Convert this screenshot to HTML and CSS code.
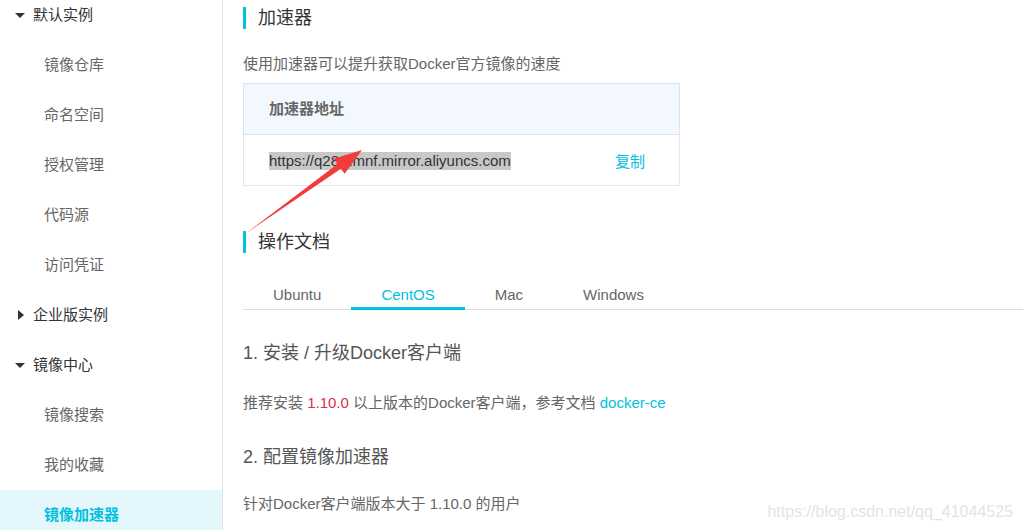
FILE: index.html
```html
<!DOCTYPE html>
<html lang="zh-CN">
<head>
    <meta charset="UTF-8">
    <meta name="viewport" content="width=device-width, initial-scale=1.0">
    <title>镜像加速器</title>
    <link rel="stylesheet" href="styles.css">
</head>
<body>
    <div class="layout">
        <!-- Боковое меню -->
        <aside class="sidebar">
            <ul class="menu">
                <li class="group"><span class="caret caret-down"></span>默认实例</li>
                <li class="item">镜像仓库</li>
                <li class="item">命名空间</li>
                <li class="item">授权管理</li>
                <li class="item">代码源</li>
                <li class="item">访问凭证</li>
                <li class="group"><span class="caret caret-right"></span>企业版实例</li>
                <li class="group"><span class="caret caret-down"></span>镜像中心</li>
                <li class="item">镜像搜索</li>
                <li class="item">我的收藏</li>
                <li class="item active">镜像加速器</li>
            </ul>
        </aside>

        <!-- Основной контент -->
        <main class="content">
            <h3 class="title title-first">加速器</h3>
            <p class="desc">使用加速器可以提升获取Docker官方镜像的速度</p>

            <div class="mirror">
                <div class="mirror-head">加速器地址</div>
                <div class="mirror-row">
                    <span class="mirror-url">https://q28r1mnf.mirror.aliyuncs.com</span>
                    <a class="link copy">复制</a>
                </div>
            </div>

            <h3 class="title title-docs">操作文档</h3>
            <ul class="tabs">
                <li class="tab">Ubuntu</li>
                <li class="tab active">CentOS</li>
                <li class="tab">Mac</li>
                <li class="tab">Windows</li>
            </ul>

            <h4 class="step step-first">1. 安装 / 升级Docker客户端</h4>
            <p class="text text-first">推荐安装 <span class="version">1.10.0</span> 以上版本的Docker客户端，参考文档 <a class="link">docker-ce</a></p>

            <h4 class="step step-second">2. 配置镜像加速器</h4>
            <p class="text text-second">针对Docker客户端版本大于 1.10.0 的用户</p>
        </main>
    </div>

    <!-- Стрелка поверх скриншота -->
    <svg class="arrow" width="1023" height="530" viewBox="0 0 1023 530">
        <polygon points="245,234 340.9,168.7 344.6,173.8 362,150 333.6,158.8 337.5,163.9" fill="#f23b3b"/>
    </svg>

    <div class="watermark">https://blog.csdn.net/qq_41044525</div>
</body>
</html>
```

FILE: styles.css
```css
/* Основные стили */
body {
    margin: 0;
    padding: 0;
    font-family: 'Liberation Sans', 'Noto Sans CJK SC', sans-serif;
    font-size: 15px;
    color: #666;
    background: #fff;
    height: 530px;
    overflow: hidden;
    position: relative;
}

ul {
    list-style: none;
    margin: 0;
    padding: 0;
}

h3, h4, p {
    margin: 0;
    font-weight: normal;
}

.layout {
    display: flex;
    height: 530px;
}

/* Боковое меню */
.sidebar {
    width: 222px;
    flex-shrink: 0;
    border-right: 1px solid #e2e2e2;
    overflow: hidden;
}

.menu {
    margin-top: -10px;
}

.menu li {
    height: 50px;
    line-height: 50px;
    white-space: nowrap;
}

.group {
    display: flex;
    align-items: center;
    padding-left: 15px;
    color: #333;
}

.caret {
    width: 18px;
    height: 50px;
    position: relative;
}

.caret::before {
    content: '';
    position: absolute;
    width: 0;
    height: 0;
}

.caret-down::before {
    left: 0;
    top: 23px;
    border-left: 5px solid transparent;
    border-right: 5px solid transparent;
    border-top: 5px solid #333;
}

.caret-right::before {
    left: 3px;
    top: 20px;
    border-top: 5px solid transparent;
    border-bottom: 5px solid transparent;
    border-left: 6px solid #333;
}

.item {
    padding-left: 44px;
    color: #666;
}

.item.active {
    background: #e3f7fc;
    color: #00c1de;
    font-weight: bold;
}

/* Контент */
.content {
    flex: 1;
    padding-left: 20px;
}

.title {
    border-left: 3px solid #00c1de;
    padding-left: 12px;
    height: 22px;
    line-height: 22px;
    font-size: 18px;
    color: #333;
}

.title-first {
    margin-top: 7px;
}

.title-docs {
    margin-top: 45px;
}

.desc {
    margin-top: 25px;
    line-height: 20px;
    color: #666;
}

/* Таблица адреса */
.mirror {
    margin-top: 9px;
    width: 437px;
}

.mirror-head {
    height: 50px;
    line-height: 50px;
    padding-left: 25px;
    background: #f2f8fd;
    border: 1px solid #d5e5f4;
    font-weight: bold;
    color: #666;
}

.mirror-row {
    height: 49px;
    display: flex;
    align-items: center;
    justify-content: space-between;
    padding: 1px 34px 0 25px;
    border: 1px solid #e6e6e6;
    border-top: none;
}

.mirror-url {
    background: #c8c8c8;
    color: #333;
    line-height: 18px;
}

.link {
    color: #00c1de;
    cursor: pointer;
}

/* Вкладки */
.tabs {
    display: flex;
    margin-top: 27px;
    border-bottom: 1px solid #dcdcdc;
}

.tab {
    padding: 1px 30px 0;
    height: 26px;
    line-height: 27px;
    border-bottom: 3px solid transparent;
    margin-bottom: -1px;
    color: #666;
    cursor: pointer;
}

.tab.active {
    color: #00c1de;
    border-bottom-color: #00c1de;
}

/* Шаги инструкции */
.step {
    font-size: 18px;
    line-height: 24px;
    color: #555;
}

.step-first {
    margin-top: 31px;
}

.step-second {
    margin-top: 32px;
}

.text {
    line-height: 20px;
    color: #666;
}

.text-first {
    margin-top: 28px;
}

.text-second {
    margin-top: 25px;
}

.version {
    color: #d8304e;
}

/* Поверх страницы */
.arrow {
    position: absolute;
    left: 0;
    top: 0;
    pointer-events: none;
}

.watermark {
    position: absolute;
    right: 10px;
    top: 502px;
    font-size: 16px;
    line-height: 20px;
    color: #e4e4e4;
}
```
